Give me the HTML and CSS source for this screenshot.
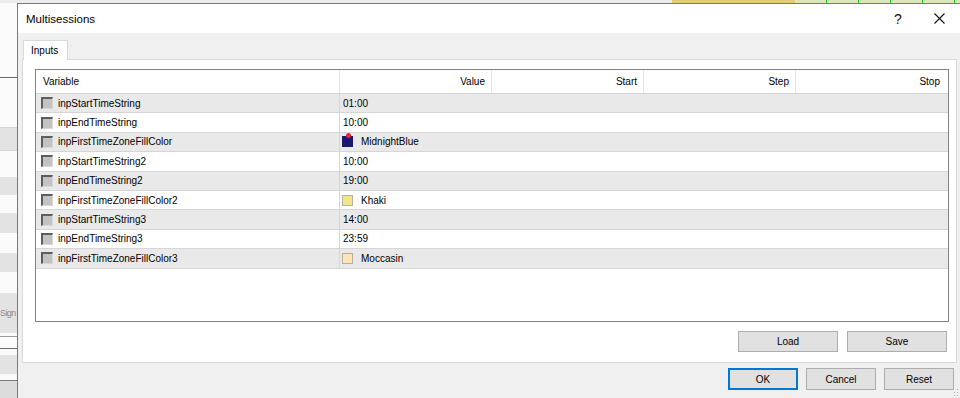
FILE: index.html
```html
<!DOCTYPE html>
<html lang="en">
<head>
<meta charset="utf-8">
<title>Multisessions</title>
<link rel="stylesheet" href="styles.css">
</head>
<body>
<div class="screen">
  <div class="topstrip">
    <div class="ts-a"></div>
    <div class="ts-b"></div>
    <div class="ts-c"></div>
  </div>
  <div class="main">
    <div class="leftstrip">
      <div class="ls s1"></div>
      <div class="ls s2"></div>
      <div class="ls s3"></div>
      <div class="ls s4"></div>
      <div class="ls s5"></div>
      <div class="ls s6"></div>
      <div class="ls s7"></div>
      <div class="ls s8"></div>
      <div class="ls s9"></div>
      <div class="ls s10"></div>
      <div class="ls s11"></div>
      <div class="ls s12"><span class="sign">Sign</span></div>
      <div class="ls s13"></div>
      <div class="ls s14"></div>
      <div class="ls s15"></div>
      <div class="ls s16"></div>
      <div class="ls s17"></div>
    </div>
    <div class="dialog">
      <div class="titlebar">
        <span class="title">Multisessions</span>
        <span class="help">?</span>
        <span class="close"><svg width="11" height="11" viewBox="0 0 11 11"><path d="M0.5 0.5 L10.5 10.5 M10.5 0.5 L0.5 10.5" stroke="#111" stroke-width="1.1" fill="none"/></svg></span>
      </div>
      <div class="dlg-body">
        <div class="tabs"><div class="tab">Inputs</div></div>
        <div class="panel">
          <div class="grid">
            <div class="row head">
              <div class="cell hv">Variable</div>
              <div class="cell hn">Value</div>
              <div class="cell hn">Start</div>
              <div class="cell hn">Step</div>
              <div class="cell hn last">Stop</div>
            </div>
            <div class="row data odd">
              <div class="cell var"><span class="cb"></span>inpStartTimeString</div>
              <div class="cell val">01:00</div>
            </div>
            <div class="row data">
              <div class="cell var"><span class="cb"></span>inpEndTimeString</div>
              <div class="cell val">10:00</div>
            </div>
            <div class="row data odd">
              <div class="cell var"><span class="cb"></span>inpFirstTimeZoneFillColor</div>
              <div class="cell val col"><span class="sw mid"><span class="dot"></span></span>MidnightBlue</div>
            </div>
            <div class="row data">
              <div class="cell var"><span class="cb"></span>inpStartTimeString2</div>
              <div class="cell val">10:00</div>
            </div>
            <div class="row data odd">
              <div class="cell var"><span class="cb"></span>inpEndTimeString2</div>
              <div class="cell val">19:00</div>
            </div>
            <div class="row data">
              <div class="cell var"><span class="cb"></span>inpFirstTimeZoneFillColor2</div>
              <div class="cell val col"><span class="sw khaki"></span>Khaki</div>
            </div>
            <div class="row data odd">
              <div class="cell var"><span class="cb"></span>inpStartTimeString3</div>
              <div class="cell val">14:00</div>
            </div>
            <div class="row data">
              <div class="cell var"><span class="cb"></span>inpEndTimeString3</div>
              <div class="cell val">23:59</div>
            </div>
            <div class="row data odd">
              <div class="cell var"><span class="cb"></span>inpFirstTimeZoneFillColor3</div>
              <div class="cell val col"><span class="sw moc"></span>Moccasin</div>
            </div>
          </div>
          <div class="panel-buttons">
            <button class="btn wide">Load</button>
            <button class="btn wide">Save</button>
          </div>
        </div>
        <div class="dlg-buttons">
          <button class="btn def">OK</button>
          <button class="btn">Cancel</button>
          <button class="btn">Reset</button>
        </div>
        <svg class="grip" width="6" height="8" viewBox="0 0 6 8"><g fill="#b4b4b4"><rect x="4" y="0" width="1" height="1"/><rect x="4" y="3" width="1" height="1"/><rect x="1" y="3" width="1" height="1"/><rect x="4" y="6" width="1" height="1"/><rect x="1" y="6" width="1" height="1"/></g></svg>
      </div>
    </div>
  </div>
</div>
</body>
</html>
```
FILE: styles.css
```css
* { box-sizing: border-box; }
html, body { margin: 0; padding: 0; }
body {
  width: 960px;
  height: 398px;
  overflow: hidden;
  background: #ffffff;
  font-family: "Liberation Sans", Arial, sans-serif;
  font-size: 10px;
  color: #000;
}
.screen { display: flex; flex-direction: column; width: 960px; height: 398px; }

/* strip of the chart window behind the dialog */
.topstrip { display: flex; height: 3px; flex: 0 0 3px; }
.ts-a { flex: 0 0 672px; background: #ececec; }
.ts-b { flex: 0 0 123px; background: #e2cc78; }
.ts-c {
  flex: 1;
  background-color: #dde6b4;
  background-image: repeating-linear-gradient(to right, transparent 0 31px, #1ec01e 31px 32px);
}

.main { display: flex; flex: 1; min-height: 0; }

.leftstrip { flex: 0 0 17px; display: flex; flex-direction: column; overflow: hidden; background: #fafafa; }
.ls { flex: 0 0 auto; }
.s1 { height: 74px; background: #fbfbfb; }
.s2 { height: 1px; background: #6d6d6d; }
.s3 { height: 50px; background: #fbfbfb; border-bottom: 1px solid #d6d6d6; }
.s4 { height: 22px; background: #e3e3e3; }
.s5 { height: 27px; background: #fbfbfb; border-top: 1px solid #d6d6d6; }
.s6 { height: 18px; background: #e3e3e3; }
.s7 { height: 18px; background: #fbfbfb; }
.s8 { height: 20px; background: #e3e3e3; }
.s9 { height: 20px; background: #fbfbfb; }
.s10 { height: 19px; background: #e3e3e3; }
.s11 { height: 21px; background: #fbfbfb; }
.s12 { height: 40px; background: #e3e3e3; display: flex; align-items: center; overflow: hidden; }
.sign { color: #8a8a8a; font-size: 9px; letter-spacing: -0.6px; margin-left: 0; white-space: nowrap; }
.s13 { height: 4px; background: #fbfbfb; border-bottom: 1px solid #9a9a9a; }
.s14 { height: 12px; background: #fbfbfb; border-bottom: 1px solid #6d6d6d; }
.s15 { height: 25px; background: #e3e3e3; border-top: 6px solid #fbfbfb; }
.s16 { height: 7px; background: #fbfbfb; border-bottom: 1px solid #7a7a7a; }
.s17 { height: 20px; background: #dcdcdc; }

/* dialog window */
.dialog {
  flex: 1;
  min-width: 0;
  display: flex;
  flex-direction: column;
  border-left: 1px solid #7a7a7a;
  border-top: 1px solid #7a7a7a;
  background: #f0f0f0;
}
.titlebar {
  height: 29px;
  flex: 0 0 29px;
  background: #ffffff;
  display: flex;
  align-items: center;
  padding-left: 8px;
}
.title { font-size: 11.5px; color: #000; flex: 1; }
.help { font-size: 14px; width: 14px; text-align: center; margin-right: 29px; color: #111; }
.close { width: 11px; height: 11px; display: flex; margin-right: 15px; }

.dlg-body {
  position: relative;
  flex: 1;
  padding-top: 7px;
  display: flex;
  flex-direction: column;
}
.tabs { display: flex; height: 19px; padding-left: 5px; position: relative; z-index: 1; }
.tab {
  width: 45px;
  height: 20px;
  background: #ffffff;
  border: 1px solid #d9d9d9;
  border-bottom: none;
  padding-left: 7px;
  display: flex;
  align-items: center;
}
.panel {
  margin-left: 4px;
  margin-right: 3px;
  height: 304px;
  background: #ffffff;
  border: 1px solid #d9d9d9;
  padding: 9px 7px 10px 12px;
  display: flex;
  flex-direction: column;
}

.grid {
  height: 253px;
  border: 1px solid #828282;
  background: #ffffff;
  display: flex;
  flex-direction: column;
}
.row { display: grid; }
.row.head {
  grid-template-columns: 304px 152px 152px 152px 1fr;
  height: 24px;
  border-bottom: 1px solid #d4d4d4;
}
.head .cell { border-right: 1px solid #e4e4e4; display: flex; align-items: center; }
.head .cell.last { border-right: none; }
.hv { padding-left: 7px; }
.hn { justify-content: flex-end; padding-right: 6px; }
.head .cell.last { padding-right: 8px; }

.row.data {
  grid-template-columns: 304px 1fr;
  height: 19.4px;
  border-bottom: 1px solid #d6d6d6;
}
.row.data.odd { background: #e9e9e9; }
.data .cell { display: flex; align-items: center; white-space: nowrap; }
.var { border-right: 1px solid #d6d6d6; padding-left: 5px; }
.val { padding-left: 3px; }
.val.col { padding-left: 2px; }

.cb {
  width: 12px;
  height: 12px;
  margin-right: 5px;
  background: #c3c3c3;
  border-top: 2px solid #5e5e5e;
  border-left: 2px solid #5e5e5e;
  border-right: 1px solid #d8d8d8;
  border-bottom: 1px solid #d8d8d8;
  flex: 0 0 12px;
}
.sw {
  position: relative;
  width: 11px;
  height: 11px;
  border: 1px solid #8a8a8a;
  margin-right: 8px;
  flex: 0 0 11px;
}
.sw.mid { background: #191970; border-color: #191970; }
.sw.khaki { background: #f0e68c; border-color: #b9b29a; }
.sw.moc { background: #ffe4b5; border-color: #b8ad9c; }
.dot {
  position: absolute;
  left: 3px;
  top: -4px;
  width: 5px;
  height: 5px;
  border-radius: 50%;
  background: #e8233a;
}

.panel-buttons {
  margin-top: 9px;
  display: flex;
  justify-content: flex-end;
  gap: 9px;
  padding-right: 2px;
}
.btn {
  font-family: "Liberation Sans", Arial, sans-serif;
  font-size: 10px;
  color: #000;
  background: #e1e1e1;
  border: 1px solid #adadad;
  border-radius: 0;
  padding: 0;
  margin: 0;
  height: 22px;
  width: 70px;
}
.btn.wide { width: 100px; height: 21px; }
.btn.def { border: 2px solid #0078d7; }
.dlg-buttons {
  margin-top: 5px;
  display: flex;
  justify-content: flex-end;
  gap: 8px;
  padding-right: 6px;
}
.grip { position: absolute; right: 1px; bottom: 1px; }
```
